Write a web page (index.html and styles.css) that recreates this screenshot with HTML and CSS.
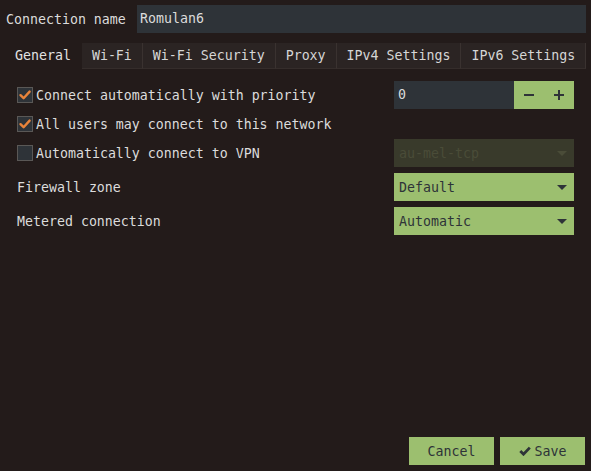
FILE: index.html
```html
<!DOCTYPE html>
<html>
<head>
<meta charset="utf-8">
<link rel="stylesheet" href="styles.css">
</head>
<body>
<div class="window">
  <div class="name-row">
    <span class="name-label">Connection name</span>
    <div class="entry name-entry">Romulan6</div>
  </div>
  <div class="tabs">
    <div class="tab active">General</div>
    <div class="tab">Wi-Fi</div>
    <div class="tab">Wi-Fi Security</div>
    <div class="tab">Proxy</div>
    <div class="tab">IPv4 Settings</div>
    <div class="tab">IPv6 Settings</div>
  </div>
  <div class="content">
    <div class="row tight">
      <label class="check"><span class="box checked"><svg viewBox="0 0 16 16" width="16" height="16"><path d="M3.5 8.2 L6.6 11.2 L12.6 4.6" fill="none" stroke="#e8833a" stroke-width="2.4" stroke-linecap="round" stroke-linejoin="round"/></svg></span>Connect automatically with priority</label>
      <div class="spin">
        <div class="entry spin-entry">0</div>
        <div class="spin-btn"><svg viewBox="0 0 12 12" width="12" height="12"><path d="M1 6 H11" stroke="#2e3338" stroke-width="2"/></svg></div>
        <div class="spin-btn"><svg viewBox="0 0 12 12" width="12" height="12"><path d="M1 6 H11 M6 1 V11" stroke="#2e3338" stroke-width="2"/></svg></div>
      </div>
    </div>
    <div class="row tight">
      <label class="check"><span class="box checked"><svg viewBox="0 0 16 16" width="16" height="16"><path d="M3.5 8.2 L6.6 11.2 L12.6 4.6" fill="none" stroke="#e8833a" stroke-width="2.4" stroke-linecap="round" stroke-linejoin="round"/></svg></span>All users may connect to this network</label>
    </div>
    <div class="row">
      <label class="check"><span class="box"></span>Automatically connect to VPN</label>
      <div class="combo disabled"><span>au-mel-tcp</span><span class="arrow"></span></div>
    </div>
    <div class="row">
      <span class="label">Firewall zone</span>
      <div class="combo"><span>Default</span><span class="arrow"></span></div>
    </div>
    <div class="row">
      <span class="label">Metered connection</span>
      <div class="combo"><span>Automatic</span><span class="arrow"></span></div>
    </div>
  </div>
  <div class="actions">
    <div class="btn">Cancel</div>
    <div class="btn"><svg class="save-icon" viewBox="0 0 12 10" width="12" height="10"><path d="M1.3 5 L4.5 8.2 L10.8 1.6" fill="none" stroke="#2e3338" stroke-width="2.8" stroke-linejoin="miter"/></svg>Save</div>
  </div>
</div>
</body>
</html>
```

FILE: styles.css
```css
html, body {
  margin: 0;
  padding: 0;
  background: #231b1a;
}
body {
  font-family: "DejaVu Sans Mono", "Liberation Mono", monospace;
  font-size: 13.28px;
  color: #dcdcdc;
  white-space: nowrap;
}
.window {
  width: 591px;
  height: 471px;
  box-sizing: border-box;
  padding: 5px 5px 6px 5px;
  display: flex;
  flex-direction: column;
}
.name-row {
  display: flex;
  align-items: center;
  height: 28px;
}
.name-label {
  width: 132px;
  padding-left: 1px;
}
.entry {
  background: #2e3338;
  color: #dcdcdc;
  height: 28px;
  line-height: 28px;
  box-sizing: border-box;
}
.name-entry {
  padding-left: 3px;
  width: 449px;
  flex: none;
}
.tabs {
  display: flex;
  margin-top: 10px;
  height: 26px;
}
.tab {
  flex: none;
  padding: 0 10px;
  line-height: 26px;
  background: #2b2423;
  border-right: 1px solid #3a3230;
  border-bottom: 1px solid #352d2b;
  box-sizing: border-box;
  height: 26px;
  color: #d6d6d6;
}
.tab.active {
  background: transparent;
  border-right: none;
  border-bottom: none;
  padding: 0 11px 0 10px;
  color: #e2e2e2;
}
.content {
  flex: 1;
  padding: 12px 12px 0 12px;
  display: flex;
  flex-direction: column;
}
.row {
  display: flex;
  align-items: center;
  justify-content: space-between;
  height: 28px;
  margin-bottom: 6px;
}
.row.tight {
  margin-bottom: 1px;
}
.check {
  display: flex;
  align-items: center;
}
.box {
  width: 16px;
  height: 16px;
  box-sizing: border-box;
  background: #2e3338;
  border: 1px solid #5a5856;
  margin-right: 3px;
  position: relative;
  display: block;
}
.box svg {
  position: absolute;
  left: -1px;
  top: -1px;
}
.spin {
  display: flex;
  width: 180px;
  height: 28px;
}
.spin-entry {
  width: 120px;
  padding-left: 4px;
}
.spin-btn {
  width: 30px;
  height: 28px;
  background: #9cbf6f;
  display: flex;
  align-items: center;
  justify-content: center;
}
.combo {
  width: 180px;
  height: 28px;
  box-sizing: border-box;
  background: #9cbf6f;
  color: #2e3338;
  display: flex;
  align-items: center;
  justify-content: space-between;
  padding: 0 7px 0 5px;
}
.combo.disabled {
  background: #393a2b;
  color: #4a4c38;
}
.arrow {
  width: 0;
  height: 0;
  border-left: 5px solid transparent;
  border-right: 5px solid transparent;
  border-top: 5px solid #2e3338;
}
.combo.disabled .arrow {
  border-top-color: #4a4c38;
}
.actions {
  display: flex;
  justify-content: flex-end;
  gap: 6px;
  padding-right: 1px;
}
.btn {
  width: 85px;
  height: 28px;
  background: #9cbf6f;
  color: #2e3338;
  display: flex;
  align-items: center;
  justify-content: center;
}
.save-icon {
  margin-right: 4px;
}
```
